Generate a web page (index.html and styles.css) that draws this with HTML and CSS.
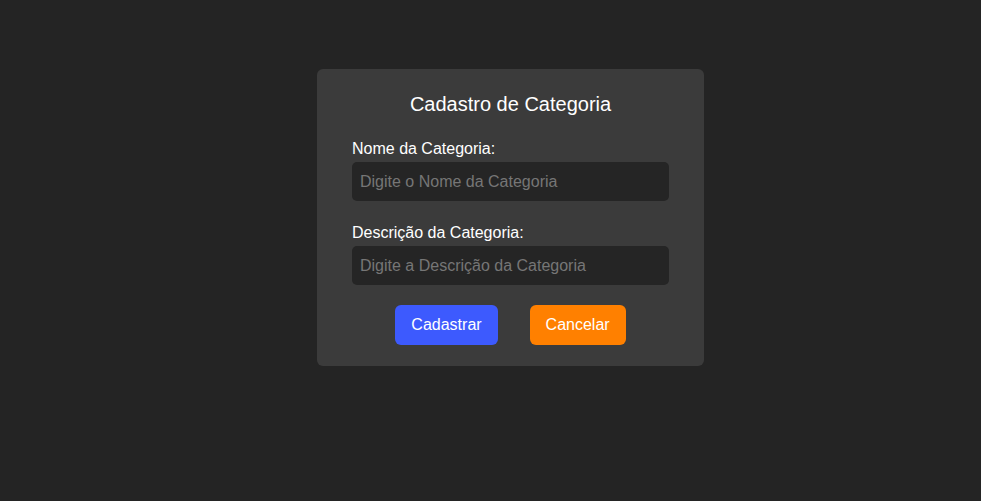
FILE: index.html
```html
<!DOCTYPE html>
<html lang="pt-BR">
<head>
<meta charset="utf-8">
<title>Cadastro de Categoria</title>
<link rel="stylesheet" href="styles.css">
</head>
<body>
<main class="page">
  <form class="card">
    <h2 class="title">Cadastro de Categoria</h2>
    <div class="field">
      <label class="label" for="nome">Nome da Categoria:</label>
      <input class="input" id="nome" type="text" placeholder="Digite o Nome da Categoria">
    </div>
    <div class="field">
      <label class="label" for="desc">Descrição da Categoria:</label>
      <input class="input" id="desc" type="text" placeholder="Digite a Descrição da Categoria">
    </div>
    <div class="actions">
      <button type="button" class="btn btn-primary">Cadastrar</button>
      <button type="button" class="btn btn-cancel">Cancelar</button>
    </div>
  </form>
</main>
</body>
</html>
```

FILE: styles.css
```css
* { box-sizing: border-box; }
html, body {
  margin: 0;
  padding: 0;
  background: #242424;
  font-family: "Liberation Sans", Arial, sans-serif;
  color: #ffffff;
}
.page {
  display: flex;
  justify-content: center;
  align-items: flex-start;
  padding-top: 69px;
  padding-left: 40px;
  min-height: 501px;
}
.card {
  width: 387px;
  background: #3b3b3b;
  border-radius: 6px;
  padding: 24px 35px 21px;
  display: flex;
  flex-direction: column;
}
.title {
  margin: 0 0 24px;
  font-size: 20px;
  font-weight: normal;
  line-height: 23px;
  text-align: center;
}
.field {
  display: flex;
  flex-direction: column;
  gap: 4px;
  margin-bottom: 23px;
}
.field + .field { margin-bottom: 20px; }
.label {
  font-size: 16px;
  line-height: 18px;
}
.input {
  height: 39px;
  border: none;
  border-radius: 5px;
  background: #252525;
  color: #ffffff;
  font-family: inherit;
  font-size: 16px;
  padding: 0 8px;
  outline: none;
}
.input::placeholder { color: #767676; }
.actions {
  display: flex;
  justify-content: center;
  gap: 32px;
}
.btn {
  height: 40px;
  padding: 0 16px;
  border: none;
  border-radius: 6px;
  font-family: inherit;
  font-size: 16px;
  color: #ffffff;
  cursor: pointer;
}
.btn-primary { background: #3d5afe; }
.btn-cancel { background: #ff8000; }
```
